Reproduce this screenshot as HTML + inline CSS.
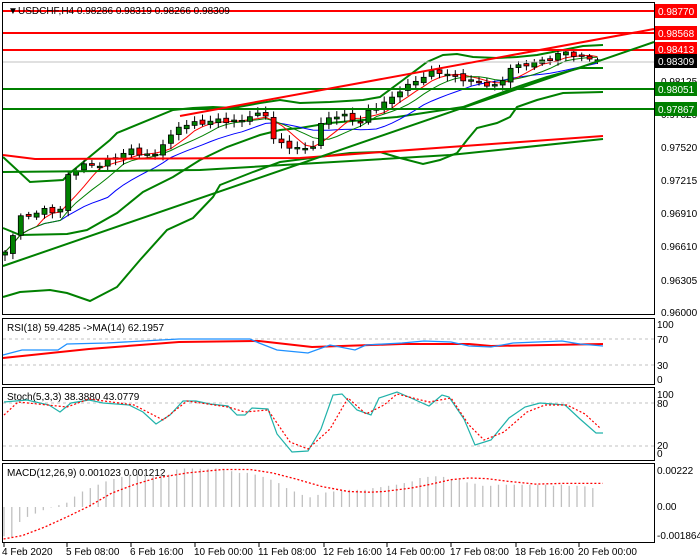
<!DOCTYPE html>
<html><head><meta charset="utf-8"><style>
html,body{margin:0;padding:0;background:#fff;}
svg{display:block;font-family:"Liberation Sans",sans-serif;font-size:10px;}
</style></head><body>
<svg id="s" width="700" height="560" viewBox="0 0 700 560" xmlns="http://www.w3.org/2000/svg">
<rect width="700" height="560" fill="#fff"/>
<!-- bollinger bands -->
<g fill="none" stroke="#008000" stroke-width="2">
<polyline points="3,157 30,182 63,180 70,173 110,140 117,133 173,110 193,108 213,107 233,108 260,103 280,100 300,103 330,102 363,100 380,97 403,80 427,62 443,55 457,54 473,57 497,58 517,57 537,55 563,50 583,46 603,45"/>
<polyline points="3,228 20,235 67,234 87,230 117,213 143,192 173,177 200,160 227,147 260,135 280,130 300,128 330,123 363,120 397,117 430,112 463,107 487,98 517,87 547,77 580,68 603,68"/>
<polyline points="3,297 20,292 50,290 67,293 90,301 117,287 140,260 167,230 193,218 213,197 220,185 253,172 280,162 350,153 380,152 400,158 423,164 440,160 457,153 467,140 477,128 497,123 510,117 517,107 537,100 563,93 603,92"/>
</g>
<g id="main"></g>
<!-- panel borders -->
<g fill="none" stroke="#000" stroke-width="1">
<rect x="2.5" y="2.5" width="652" height="312"/>
<rect x="2.5" y="318.5" width="652" height="66"/>
<rect x="2.5" y="387.5" width="652" height="73"/>
<rect x="2.5" y="463.5" width="652" height="79"/>
</g>
<!-- horizontal levels -->
<line x1="3" y1="11" x2="654" y2="11" stroke="#f00" stroke-width="2"/>
<line x1="3" y1="33" x2="654" y2="33" stroke="#f00" stroke-width="2"/>
<line x1="3" y1="50" x2="654" y2="50" stroke="#f00" stroke-width="2"/>
<line x1="3" y1="62" x2="654" y2="62" stroke="#c0c0c0" stroke-width="1"/>
<line x1="3" y1="89" x2="654" y2="89" stroke="#008000" stroke-width="2"/>
<line x1="3" y1="109" x2="654" y2="109" stroke="#008000" stroke-width="2"/>
<!-- trend lines -->
<line x1="180" y1="116" x2="654" y2="29" stroke="#f00" stroke-width="2"/>
<polyline points="3,155 35,159 300,158 450,147 603,136" fill="none" stroke="#f00" stroke-width="2"/>
<line x1="3" y1="266" x2="654" y2="42" stroke="#008000" stroke-width="2"/>
<polyline points="3,172 200,170 450,155 603,139" fill="none" stroke="#008000" stroke-width="2"/>
<text x="8" y="14" fill="#000">▼</text>
<text x="18" y="14" fill="#000">USDCHF,H4  0.98286 0.98319 0.98266 0.98309</text>
<!-- right axis -->
<g fill="#000">
<text x="661" y="17">0.98750</text>
<text x="661" y="85">0.98125</text>
<text x="661" y="118">0.97820</text>
<text x="661" y="151">0.97520</text>
<text x="661" y="184">0.97215</text>
<text x="661" y="217">0.96910</text>
<text x="661" y="250">0.96610</text>
<text x="661" y="284">0.96305</text>
<text x="661" y="316">0.96000</text>
</g>
<g font-size="10">
<rect x="655" y="4" width="42" height="14" fill="#f00"/><text x="658" y="15" fill="#fff">0.98770</text>
<rect x="655" y="26" width="42" height="14" fill="#f00"/><text x="658" y="37" fill="#fff">0.98568</text>
<rect x="655" y="42" width="42" height="14" fill="#f00"/><text x="658" y="53" fill="#fff">0.98413</text>
<rect x="655" y="54" width="42" height="14" fill="#000"/><text x="658" y="65" fill="#fff">0.98309</text>
<rect x="655" y="82" width="42" height="14" fill="#008000"/><text x="658" y="93" fill="#fff">0.98051</text>
<rect x="655" y="102" width="42" height="14" fill="#008000"/><text x="658" y="113" fill="#fff">0.97867</text>
</g>
<!-- RSI -->
<line x1="3" y1="339" x2="654" y2="339" stroke="#c0c0c0" stroke-dasharray="3,3"/>
<line x1="3" y1="365" x2="654" y2="365" stroke="#c0c0c0" stroke-dasharray="3,3"/>
<text x="7" y="331">RSI(18) 59.4285  -&gt;MA(14) 62.1957</text>
<text x="657" y="328">100</text><text x="657" y="343">70</text><text x="657" y="369">30</text><text x="657" y="383">0</text>
<polyline points="3,358 89,349 179,342 259,341 312,347 402,344 469,344 491,346 603,344" fill="none" stroke="#f00" stroke-width="2"/>
<polyline points="3,355 22,350 58,350 67,344 107,343 179,339 250,339 259,343 277,350 308,353 330,345 355,350 366,345 402,343 424,341 451,342 469,346 491,347 513,343 562,341 580,344 603,346" fill="none" stroke="#1e90ff" stroke-width="1.3"/>
<!-- Stoch -->
<line x1="3" y1="403" x2="654" y2="403" stroke="#c0c0c0" stroke-dasharray="3,3"/>
<line x1="3" y1="446" x2="654" y2="446" stroke="#c0c0c0" stroke-dasharray="3,3"/>
<text x="7" y="400">Stoch(5,3,3) 38.3880 43.0779</text>
<text x="657" y="398">100</text><text x="657" y="407">80</text><text x="657" y="449">20</text><text x="657" y="457">0</text>
<polyline points="4,402 27,400 49,405 60,412 71,403 89,400 103,403 129,405 143,412 156,424 170,415 183,401 196,401 210,404 228,406 237,415 245,415 252,408 268,409 277,434 292,452 308,451 321,429 333,395 342,394 357,410 371,415 379,398 397,392 411,398 429,406 442,395 449,397 464,419 475,445 491,440 509,418 525,407 540,403 565,405 580,419 596,433 603,433" fill="none" stroke="#20b2aa" stroke-width="1.2"/>
<polyline points="4,415 18,402 67,407 89,399 134,405 163,420 187,401 228,407 245,412 268,410 290,442 308,449 330,429 348,398 366,414 384,405 397,394 429,402 451,398 469,425 484,440 504,432 527,412 545,405 567,405 585,414 600,428" fill="none" stroke="#f00" stroke-width="1.2" stroke-dasharray="2,2"/>
<!-- MACD -->
<text x="7" y="476">MACD(12,26,9) 0.001023 0.001212</text>
<text x="657" y="474">0.00222</text><text x="657" y="510">0.00</text><text x="657" y="539">-0.001864</text>
<g id="macd"></g>
<!-- time axis -->
<g stroke="#000"><line x1="4" y1="543" x2="4" y2="547"/><line x1="67" y1="543" x2="67" y2="547"/><line x1="131" y1="543" x2="131" y2="547"/><line x1="195" y1="543" x2="195" y2="547"/><line x1="259" y1="543" x2="259" y2="547"/><line x1="324" y1="543" x2="324" y2="547"/><line x1="387" y1="543" x2="387" y2="547"/><line x1="451" y1="543" x2="451" y2="547"/><line x1="516" y1="543" x2="516" y2="547"/><line x1="579" y1="543" x2="579" y2="547"/></g>
<g fill="#000">
<text x="2" y="555">4 Feb 2020</text><text x="66" y="555">5 Feb 08:00</text><text x="130" y="555">6 Feb 16:00</text><text x="194" y="555">10 Feb 00:00</text><text x="258" y="555">11 Feb 08:00</text><text x="323" y="555">12 Feb 16:00</text><text x="386" y="555">14 Feb 00:00</text><text x="450" y="555">17 Feb 08:00</text><text x="515" y="555">18 Feb 16:00</text><text x="578" y="555">20 Feb 00:00</text>
</g>
</svg>
<script>
(function(){
var kp=[[5,252],[20,218],[45,210],[60,212],[65,178],[75,170],[85,165],[100,165],[110,160],[120,155],[130,150],[145,155],[155,155],[160,145],[170,138],[180,125],[200,123],[220,120],[240,122],[250,115],[267,115],[275,143],[292,147],[308,150],[315,143],[322,122],[330,117],[340,115],[348,117],[360,122],[370,110],[380,105],[390,100],[400,90],[410,85],[420,78],[430,73],[440,72],[450,75],[460,78],[475,82],[490,85],[500,88],[507,67],[515,68],[523,65],[532,63],[540,62],[555,57],[562,52],[570,52],[578,58],[595,58],[603,62]];
function f(x){for(var i=1;i<kp.length;i++){if(x<=kp[i][0]){var a=kp[i-1],b=kp[i];return a[1]+(b[1]-a[1])*(x-a[0])/(b[0]-a[0]);}}return kp[kp.length-1][1];}
var n=76,xs=[],c=[],o=[],s='';
for(var i=0;i<n;i++){var x=5+i*7.9;xs.push(x);var cl=f(x)+Math.sin(i*2.3)*2;c.push(cl);o.push(i?c[i-1]+Math.sin(i*1.7)*1.5:cl+3);}
function sma(p){var r=[];for(var i=0;i<n;i++){var a=Math.max(0,i-p+1),t=0;for(var j=a;j<=i;j++)t+=c[j];r.push(t/(i-a+1));}return r;}
function pl(arr,col,w){var p=arr.map(function(y,i){return xs[i].toFixed(1)+','+y.toFixed(1)}).join(' ');return '<polyline points="'+p+'" fill="none" stroke="'+col+'" stroke-width="'+w+'"/>';}
s+=pl(sma(14),'#0000ff',1)+pl(sma(5),'#f00',1)+pl(sma(8),'#008000',1);
for(var i=0;i<n;i++){var t=Math.min(o[i],c[i]),b=Math.max(o[i],c[i]);if(b-t<1.5)b=t+1.5;var hi=t-2-Math.abs(Math.sin(i*3.1))*4,lw=b+2+Math.abs(Math.cos(i*2.7))*4;var col=c[i]<=o[i]?'#008000':'#f00';var x=xs[i];
s+='<line x1="'+x+'" y1="'+hi+'" x2="'+x+'" y2="'+lw+'" stroke="#000"/>';
s+='<rect x="'+(x-2.5)+'" y="'+t+'" width="5" height="'+(b-t)+'" fill="'+col+'" stroke="#000" stroke-width="0.8"/>';}
document.getElementById('main').innerHTML=s;
var mb=[697,700,655,640,630,620,612,605,598,580,565,555,545,535,528,522,515,510,512,518,515,515,500,497,497,498,498,497,500,505,510,510,515,522,530,540,555,565,575,582,575,568,565,563,560,560,560,555,552,548,545,540,535,525,522,520,522,528,530,538,542,548,548,545,545,545,545,545,545,545,548,545,548,548,550,555];
var m='',z=507;for(var i=0;i<mb.length;i++){var x=(4+i*7.85).toFixed(1);var y=mb[i]/2.95+300;m+='<line x1="'+x+'" y1="'+z+'" x2="'+x+'" y2="'+y.toFixed(1)+'" stroke="#c0c0c0" stroke-width="1.3"/>';}
var sg=[[8,705],[50,695],[100,670],[150,640],[200,608],[250,570],[300,545],[350,525],[420,510],[500,500],[560,500],[610,510],[660,527],[720,550],[780,565],[830,567],[860,565],[920,555],[960,545],[1010,530],[1050,525],[1090,527],[1140,535],[1200,543],[1260,541],[1350,541]];
m+='<polyline points="'+sg.map(function(p){return (p[0]/2.24).toFixed(1)+','+(p[1]/2.95+300).toFixed(1)}).join(' ')+'" fill="none" stroke="#f00" stroke-width="1.3" stroke-dasharray="2,2"/>';
document.getElementById('macd').innerHTML=m;
})();
</script>
</body></html>
